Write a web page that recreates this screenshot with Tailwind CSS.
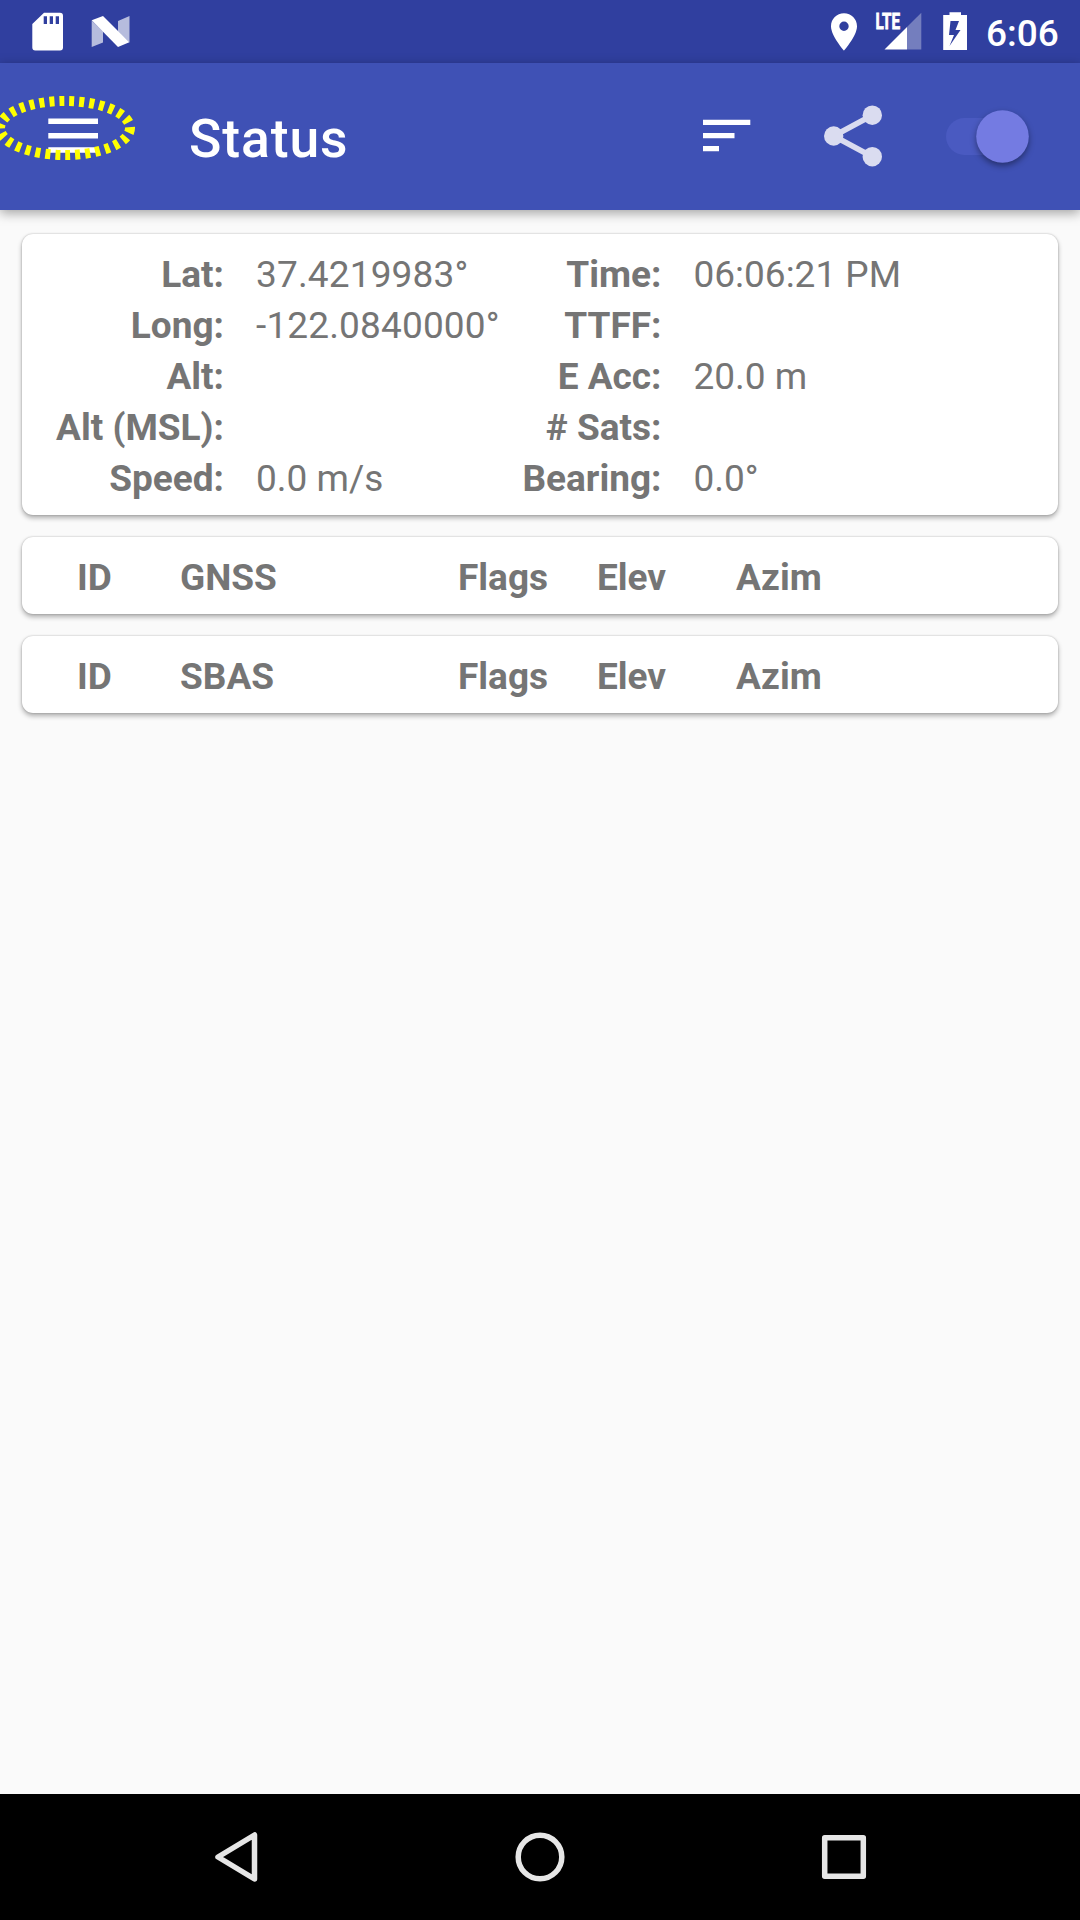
<!DOCTYPE html>
<html lang="en">
<head>
<meta charset="utf-8">
<title>Status</title>
<script src="https://cdn.jsdelivr.net/npm/@tailwindcss/browser@4"></script>
</head>
<body class="flex h-[1920px] w-[1080px] flex-col overflow-hidden bg-[#fafafa] font-['Roboto',sans-serif] text-[#757575]">
  <!-- System status bar -->
  <div class="flex h-[63px] shrink-0 items-center justify-between bg-[#303f9f] text-white">
    <svg class="h-[63px] w-[140px]" viewBox="0 0 140 63" fill="#fff">
      <path fill-rule="evenodd" d="M44 12.7H60Q63 12.7 63 15.7V47.5Q63 50.5 60 50.5H35.300Q32.300 50.500 32.300 47.500V24ZM43.700 16.300V24H47V16.300ZM49.700 16.300V24H53V16.300ZM55.700 16.300V24H59V16.300Z"/>
      <path opacity=".65" d="M91.700 20.500L103 31.500V42.500L91.700 47ZM118 21L129.500 16V42.500L118 31.500Z"/>
      <path d="M91.700 20.300L103 16L129.300 42.300L118 47Z"/>
    </svg>
    <div class="flex h-[63px] items-center">
      <svg class="h-[63px] w-[160px]" viewBox="820 0 160 63" fill="#fff">
        <path fill-rule="evenodd" d="M844 13.300C836.700 13.300 831 19 831 26.200C831 36 844 50.500 844 50.500S857 36 857 26.200C857 19 851.300 13.300 844 13.300ZM844 31A4.700 4.700 0 1 1 844 21.600A4.700 4.700 0 0 1 844 31Z"/>
        <text x="875.500" y="29.100" font-family="Roboto" font-weight="700" font-size="22" textLength="24.500" lengthAdjust="spacingAndGlyphs" stroke="#fff" stroke-width=".8">LTE</text>
        <path opacity=".33" d="M907 27L921.300 12.700V49.500H907Z"/>
        <path d="M884.500 49.500L907 27V49.500Z"/>
        <path fill-rule="evenodd" d="M949.500 12.300H961V15H967V50H943.200V15H949.500ZM950.500 21L949 35H954L949.500 46L960.500 30H955.500L959 21Z"/>
      </svg>
      <span class="w-[100px] pt-[4px] pl-[6px] text-[37px] leading-[63px] font-medium">6:06</span>
    </div>
  </div>

  <!-- App bar -->
  <header class="relative z-10 flex h-[147px] shrink-0 items-center bg-[#3f51b5] shadow-[0_3px_11px_rgba(0,0,0,0.36)]">
    <svg class="h-[147px] w-[189px] shrink-0" viewBox="0 63 189 147" fill="none">
      <path fill="#fff" d="M48.300 118.500H98V124H48.300ZM48.300 133H98V138.500H48.300ZM48.300 147.300H98V152.800H48.300Z"/>
      <ellipse cx="65" cy="128" rx="65" ry="27" stroke="#ff0" stroke-width="10" stroke-dasharray="5 5"/>
    </svg>
    <h1 class="flex-1 pt-[5px] text-[53.500px] leading-[60px] font-medium tracking-[0.9px] text-white">Status</h1>
    <svg class="h-[147px] w-[380px] shrink-0" viewBox="700 63 380 147">
      <path fill="#fff" d="M703 119.700H750.300V125H703ZM703 133H734.500V138.200H703ZM703 146H719V151.200H703Z"/>
      <g fill="#dadcf0" stroke="none">
        <path d="M872.300 115.200L833.700 136L872.300 156.700" fill="none" stroke="#dadcf0" stroke-width="5.600"/>
        <circle cx="833.700" cy="136" r="9.700"/><circle cx="872.300" cy="115.200" r="9.700"/><circle cx="872.300" cy="156.700" r="9.700"/>
      </g>
      <rect x="946" y="118" width="75" height="37" rx="18.500" fill="#4a5ac1"/>
      <circle class="drop-shadow-[0_3px_3px_rgba(0,0,0,0.4)]" cx="1002.500" cy="136.500" r="26.300" fill="#747be2"/>
    </svg>
  </header>

  <main class="flex flex-1 flex-col gap-[22px] px-[22px] pt-[24px] text-[37px] leading-[51px]">
    <section class="h-[281px] rounded-[11px] bg-white pt-[15px] shadow-[0_3px_5px_rgba(0,0,0,0.3),0_0_2px_rgba(0,0,0,0.25)]">
      <div class="grid grid-cols-[202px_197px_176.5px_1fr] gap-x-[32px] whitespace-nowrap">
        <b class="text-right">Lat:</b><span class="tracking-[0.15px]">37.4219983°</span><b class="text-right">Time:</b><span>06:06:21 PM</span>
        <b class="text-right">Long:</b><span class="tracking-[0.15px]">-122.0840000°</span><b class="text-right">TTFF:</b><span></span>
        <b class="text-right">Alt:</b><span></span><b class="text-right">E Acc:</b><span>20.0 m</span>
        <b class="text-right">Alt (MSL):</b><span></span><b class="text-right"># Sats:</b><span></span>
        <b class="text-right">Speed:</b><span>0.0 m/s</span><b class="text-right">Bearing:</b><span>0.0°</span>
      </div>
    </section>
    <section class="grid h-[77px] grid-cols-[103px_278px_139px_139px_1fr] rounded-[11px] bg-white pt-[15px] pl-[55px] font-bold shadow-[0_3px_5px_rgba(0,0,0,0.3),0_0_2px_rgba(0,0,0,0.25)]">
      <span>ID</span><span>GNSS</span><span>Flags</span><span>Elev</span><span>Azim</span>
    </section>
    <section class="grid h-[77px] grid-cols-[103px_278px_139px_139px_1fr] rounded-[11px] bg-white pt-[15px] pl-[55px] font-bold shadow-[0_3px_5px_rgba(0,0,0,0.3),0_0_2px_rgba(0,0,0,0.25)]">
      <span>ID</span><span>SBAS</span><span>Flags</span><span>Elev</span><span>Azim</span>
    </section>
  </main>

  <!-- System navigation bar -->
  <nav class="h-[126px] shrink-0 bg-black">
    <svg class="h-[126px] w-[1080px]" viewBox="0 1794 1080 126" fill="none" stroke="#e6e6e6" stroke-width="5.500" stroke-linejoin="round">
      <path d="M254.500 1835V1879L218 1857Z"/>
      <circle cx="540" cy="1857" r="21.800"/>
      <rect x="824.700" y="1837.700" width="38.600" height="38.600"/>
    </svg>
  </nav>
</body>
</html>
